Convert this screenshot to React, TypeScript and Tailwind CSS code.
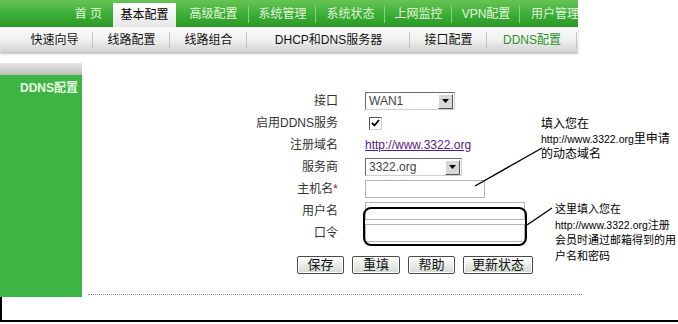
import React from "react";

const font = { fontFamily: '"Liberation Sans", "Noto Sans CJK SC", sans-serif' };

const topTabs = [
  { label: "首 页", w: "w-[110px]", align: "justify-end pr-[8px]" },
  { label: "基本配置", w: "w-[68px]", active: true },
  { label: "高级配置", w: "w-[71px]" },
  { label: "系统管理", w: "w-[67px]" },
  { label: "系统状态", w: "w-[69px]" },
  { label: "上网监控", w: "w-[67px]" },
  { label: "VPN配置", w: "w-[68px]" },
  { label: "用户管理", w: "w-[70px]", align: "justify-start pl-[11px]" },
];

const subTabs = [
  { label: "快速向导", w: "w-[77px]" },
  { label: "线路配置", w: "w-[77px]" },
  { label: "线路组合", w: "w-[77px]" },
  { label: "DHCP和DNS服务器", w: "w-[163px]" },
  { label: "接口配置", w: "w-[77px]" },
  { label: "DDNS配置", w: "w-[90px]", active: true },
];

function Arrow() {
  return (
    <div className="w-[15px] h-[15px] mr-[1px] bg-[#d8d8d4] border border-t-white border-l-white border-r-[#555] border-b-[#555] flex items-center justify-center">
      <svg width="7" height="4" viewBox="0 0 7 4">
        <path d="M0 0 H7 L3.5 4 Z" fill="#000" />
      </svg>
    </div>
  );
}

function Select({ value, w }: { value: string; w: string }) {
  return (
    <div className={`${w} h-[18px] flex items-center justify-between border border-t-[#6a6a6a] border-l-[#6a6a6a] border-r-[#cfcfcf] border-b-[#cfcfcf] bg-white`}>
      <span className="pl-[3px] text-[12px] text-[#444]">{value}</span>
      <Arrow />
    </div>
  );
}

function Row({ label, star, children }: { label: string; star?: boolean; children: React.ReactNode }) {
  return (
    <div className="flex items-center h-[22px]">
      <div className="w-[256px] text-right text-[12px] text-[#333]">
        {label}
        {star && <span className="text-[#c01010]">*</span>}
      </div>
      <div className="ml-[27px] flex items-center">{children}</div>
    </div>
  );
}

function Btn({ label, w }: { label: string; w: string }) {
  return (
    <div className={`${w} h-[18px] flex items-center justify-center text-[13px] text-[#111] rounded-[2px] border border-[#4a4a4a] bg-gradient-to-b from-white to-[#d3dad2] shadow-[inset_0_0_0_1px_rgba(255,255,255,0.9)]`}>
      {label}
    </div>
  );
}

export default function App() {
  return (
    <div className="relative w-[678px] h-[324px] overflow-hidden bg-white" style={font}>
      {/* top nav */}
      <div className="flex w-[578px] h-[27px] overflow-hidden bg-gradient-to-b from-[#66c455] via-[#3db038] to-[#2a9826]">
        {topTabs.map((t, i) => (
          <div key={i} className={`${t.w} shrink-0 h-full flex items-center relative ${t.align ?? "justify-center"}`}>
            {t.active ? (
              <div className="absolute left-[3px] right-[2px] top-[3px] bottom-0 bg-gradient-to-b from-white to-[#e6e6e6] flex items-center justify-center text-[12px] text-black">
                {t.label}
              </div>
            ) : (
              <span className="text-[12px] text-[#e4f4dc] whitespace-nowrap">{t.label}</span>
            )}
            {i > 1 && i < 7 && <div className="absolute right-0 top-[5px] bottom-[4px] w-px bg-[#86d27a]" />}
          </div>
        ))}
      </div>

      {/* sub nav */}
      <div className="flex w-[578px] h-[25px] pl-[16px] bg-gradient-to-b from-[#fbfbfb] via-[#f1f1f1] to-[#d2d2d2] shadow-[0_2px_2px_rgba(0,0,0,0.25)]">
        {subTabs.map((t, i) => (
          <div key={i} className={`${t.w} shrink-0 h-full flex items-center justify-center relative`}>
            <span className={`text-[12px] whitespace-nowrap ${t.active ? "text-[#2b922b]" : "text-[#111]"}`}>{t.label}</span>
            <div className="absolute right-0 top-[5px] bottom-[4px] w-px bg-[#c4c4c4]" />
          </div>
        ))}
      </div>

      {/* body */}
      <div className="flex mt-[11px] h-[234px]">
        <div className="w-[82px] shrink-0 flex flex-col">
          <div className="h-[12px] bg-gradient-to-b from-[#e8e8e8] to-[#bebebe]" />
          <div className="flex-1 bg-[#3db545] pt-[4px] pr-[4px] text-right text-[12px] font-bold text-[#e9fbe2]">DDNS配置</div>
        </div>

        <div className="flex-1 pt-[27px]">
          <Row label="接口">
            <Select value="WAN1" w="w-[90px]" />
          </Row>
          <Row label="启用DDNS服务">
            <div className="ml-[4px] w-[13px] h-[13px] bg-white border border-t-[#555] border-l-[#555] border-r-[#d0d0d0] border-b-[#d0d0d0] flex items-center justify-center">
              <svg width="9" height="8" viewBox="0 0 9 8">
                <path d="M1 4 L3.5 6.5 L8 1" stroke="#000" strokeWidth="1.8" fill="none" />
              </svg>
            </div>
          </Row>
          <Row label="注册域名">
            <span className="text-[12px] text-[#551a8b] underline">http://www.3322.org</span>
          </Row>
          <Row label="服务商">
            <Select value="3322.org" w="w-[97px]" />
          </Row>
          <Row label="主机名" star>
            <div className="w-[120px] h-[18px] border border-[#b4b4b4] bg-white" />
          </Row>
          <Row label="用户名">
            <div className="w-[160px] h-[18px] border border-[#b4b4b4] bg-white" />
          </Row>
          <Row label="口令">
            <div className="w-[160px] h-[18px] border border-[#b4b4b4] bg-white" />
          </Row>

          <div className="flex items-center gap-[8px] ml-[215px] mt-[12px]">
            <Btn label="保存" w="w-[47px]" />
            <Btn label="重填" w="w-[48px]" />
            <Btn label="帮助" w="w-[47px]" />
            <Btn label="更新状态" w="w-[70px]" />
          </div>

          <div className="ml-[6px] mt-[20px] w-[494px] border-t border-dotted border-[#8c8c8c]" />
        </div>
      </div>

      {/* footer frame */}
      <div className="h-[25px] border-l-2 border-b-2 border-black" />

      {/* annotations */}
      <div className="absolute left-[363px] top-[207px] w-[164px] h-[39px] rounded-[8px] border-2 border-black" />
      <svg className="absolute left-0 top-0" width="678" height="324">
        <line x1="475" y1="186" x2="542" y2="148" stroke="#000" strokeWidth="1.4" />
        <line x1="527" y1="225" x2="552" y2="208" stroke="#000" strokeWidth="1.4" />
      </svg>
      <div className="absolute left-[541px] top-[117px] text-[12px] leading-[15px] text-black">
        <div>填入您在</div>
        <div>
          <span className="text-[10.5px]">http://www.3322.org</span>里申请
        </div>
        <div>的动态域名</div>
      </div>
      <div className="absolute left-[555px] top-[202px] text-[11px] leading-[15.5px] text-black">
        <div>这里填入您在</div>
        <div>
          <span className="text-[10.5px]">http://www.3322.org</span>注册
        </div>
        <div>会员时通过邮箱得到的用</div>
        <div>户名和密码</div>
      </div>
    </div>
  );
}
